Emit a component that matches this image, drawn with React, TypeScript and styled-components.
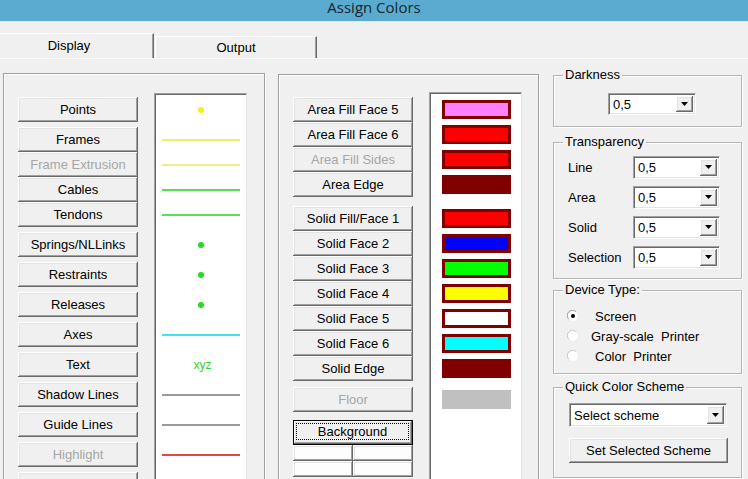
import React from 'react';
import styled, { createGlobalStyle, css } from 'styled-components';

const GlobalStyle = createGlobalStyle`
  html, body {
    margin: 0;
    padding: 0;
    background: #f0f0f0;
  }
  body {
    font-family: "Liberation Sans", Arial, sans-serif;
    font-size: 13px;
    color: #000;
  }
`;

const raised = css`
  box-shadow: inset -1px -1px #696969, inset 1px 1px #ffffff,
    inset -2px -2px #a0a0a0, inset 2px 2px #e3e3e3;
`;

const Window = styled.div`
  width: 748px;
  height: 479px;
  overflow: hidden;
  background: #f0f0f0;
  display: flex;
  flex-direction: column;
`;

const TitleBar = styled.div`
  flex: none;
  height: 21px;
  background: #5babd0;
  border-bottom: 1px solid #e6e6e6;
  text-align: center;
  font-family: "Open Sans", "Noto Sans", sans-serif;
  font-size: 15px;
  line-height: 15px;
  color: #16252d;
`;

const TabStrip = styled.div`
  flex: none;
  height: 36px;
  display: flex;
  align-items: flex-end;
`;

const Tab = styled.div<{ $active?: boolean; $width: number }>`
  box-sizing: border-box;
  width: ${p => p.$width}px;
  height: ${p => (p.$active ? 25 : 22)}px;
  margin-left: ${p => (p.$active ? 0 : 1)}px;
  padding-right: ${p => (p.$active ? 16 : 0)}px;
  padding-bottom: ${p => (p.$active ? 1 : 0)}px;
  border-top: 1px solid #fff;
  border-left: 1px solid ${p => (p.$active ? '#f0f0f0' : '#fff')};
  border-right: 1px solid #696969;
  box-shadow: inset -1px 0 #a0a0a0;
  display: flex;
  align-items: center;
  justify-content: center;
`;

const Page = styled.div`
  flex: 1;
  min-height: 0;
  border-top: 1px solid #fff;
  display: flex;
  align-items: flex-start;
  padding-left: 3px;
`;

const Panel = styled.div<{ $top: number; $left: number; $width: number; $padTop: number }>`
  box-sizing: border-box;
  flex: none;
  width: ${p => p.$width}px;
  height: 430px;
  margin: ${p => p.$top}px 0 0 ${p => p.$left}px;
  padding: ${p => p.$padTop}px 0 0 14px;
  border: 1px solid #a0a0a0;
  box-shadow: inset 1px 1px #fff, 1px 1px #fff;
  display: flex;
  align-items: flex-start;
  gap: 16px;
`;

const ButtonColumn = styled.div<{ $offset: number }>`
  width: 120px;
  margin-top: ${p => p.$offset}px;
  display: flex;
  flex-direction: column;
`;

const Btn = styled.button<{ $gap?: number; $width?: number; $height?: number; $left?: number }>`
  box-sizing: border-box;
  display: flex;
  align-items: center;
  justify-content: center;
  width: ${p => p.$width ?? 120}px;
  height: ${p => p.$height ?? 25}px;
  margin: ${p => p.$gap ?? 0}px 0 0 ${p => p.$left ?? 0}px;
  padding: 0 0 1px;
  border: none;
  background: #f0f0f0;
  font: inherit;
  color: #000;
  white-space: nowrap;
  ${raised}

  &:disabled {
    color: #a6a6a6;
  }
`;

const DefaultBtn = styled(Btn)`
  border: 1px solid #000;
  padding: 2px 3px 4px 2px;
  align-items: stretch;
`;

const FocusRing = styled.span`
  flex: 1;
  display: flex;
  align-items: center;
  justify-content: center;
  border: 1px dotted #000;
`;

const SmallGrid = styled.div`
  display: grid;
  grid-template-columns: 60px 60px;
`;

const SmallBtn = styled(Btn)`
  background: #fdfdfd;
`;

const Preview = styled.div<{ $padTop: number }>`
  box-sizing: border-box;
  width: 93px;
  height: 420px;
  padding-top: ${p => p.$padTop}px;
  background: #fff;
  border-top: 1px solid #a0a0a0;
  border-left: 1px solid #a0a0a0;
  border-right: 1px solid #e3e3e3;
  border-bottom: 1px solid #e3e3e3;
  box-shadow: inset 1px 1px #696969;
`;

const MarkerRow = styled.div<{ $gap?: number; $center?: boolean }>`
  height: 25px;
  margin-top: ${p => p.$gap ?? 0}px;
  display: flex;
  align-items: center;
  justify-content: ${p => (p.$center ? 'center' : 'flex-start')};
`;

const Dot = styled.span<{ $color: string }>`
  width: 6px;
  height: 6px;
  border-radius: 50%;
  background: ${p => p.$color};
  margin-left: 1px;
`;

const Line = styled.span<{ $color: string }>`
  width: 78px;
  height: 2px;
  margin-left: 7px;
  background: ${p => p.$color};
`;

const MarkerText = styled.span<{ $color: string }>`
  font-size: 12px;
  color: ${p => p.$color};
  margin-left: 4px;
`;

const Swatch = styled.span<{ $fill: string; $framed?: boolean }>`
  box-sizing: border-box;
  width: 69px;
  height: 19px;
  margin-left: 12px;
  background: ${p => p.$fill};
  border: 3px solid ${p => (p.$framed ? '#800000' : p.$fill)};
`;

const RightColumn = styled.div`
  flex: none;
  width: 189px;
  margin-left: 14px;
  display: flex;
  flex-direction: column;
`;

const Group = styled.fieldset<{ $gap: number; $height: number }>`
  box-sizing: border-box;
  min-width: 0;
  height: ${p => p.$height}px;
  margin: ${p => p.$gap}px 0 0;
  padding: 0;
  border: 1px solid #b5b5b5;
  box-shadow: inset 1px 1px #fff, 1px 1px #fff;
`;

const Legend = styled.legend`
  margin-left: 9px;
  padding: 0 2px;
  line-height: 16px;
  background: #f0f0f0;
`;

const Combo = styled.div<{ $width: number; $height: number; $top?: number; $left?: number }>`
  box-sizing: border-box;
  width: ${p => p.$width}px;
  height: ${p => p.$height}px;
  margin: ${p => p.$top ?? 0}px 0 0 ${p => p.$left ?? 0}px;
  padding: 2px;
  background: #fff;
  border-top: 1px solid #a0a0a0;
  border-left: 1px solid #a0a0a0;
  border-right: 1px solid #fff;
  border-bottom: 1px solid #fff;
  box-shadow: inset 1px 1px #696969, inset -1px -1px #e3e3e3;
  display: flex;
`;

const ComboValue = styled.span`
  flex: 1;
  display: flex;
  align-items: center;
  padding-left: 2px;
  white-space: nowrap;
`;

const ComboArrow = styled.span`
  width: 17px;
  background: #f0f0f0;
  display: flex;
  align-items: center;
  justify-content: center;
  ${raised}
`;

const TransRow = styled.div`
  height: 30px;
  padding-left: 14px;
  display: grid;
  grid-template-columns: 65px 87px;
  align-items: center;
`;

const TransList = styled.div`
  padding-top: 2px;
`;

const RadioList = styled.div`
  padding: 8px 0 0 13px;
`;

const RadioRow = styled.div<{ $indent: number }>`
  height: 20px;
  display: flex;
  align-items: center;
`;

const RadioLabel = styled.span<{ $indent: number }>`
  margin-left: ${p => p.$indent}px;
  white-space: pre;
`;

type Marker =
  | { kind: 'dot'; color: string }
  | { kind: 'line'; color: string }
  | { kind: 'text'; color: string; text: string };

interface DisplayRow {
  label: string;
  gap?: number;
  disabled?: boolean;
  marker?: Marker;
}

const displayRows: DisplayRow[] = [
  { label: 'Points', marker: { kind: 'dot', color: '#f2f21a' } },
  { label: 'Frames', gap: 5, marker: { kind: 'line', color: '#eeee6a' } },
  { label: 'Frame Extrusion', disabled: true, marker: { kind: 'line', color: '#f0f080' } },
  { label: 'Cables', marker: { kind: 'line', color: '#55e055' } },
  { label: 'Tendons', marker: { kind: 'line', color: '#55e055' } },
  { label: 'Springs/NLLinks', gap: 5, marker: { kind: 'dot', color: '#1ede1e' } },
  { label: 'Restraints', gap: 5, marker: { kind: 'dot', color: '#1ede1e' } },
  { label: 'Releases', gap: 5, marker: { kind: 'dot', color: '#1ede1e' } },
  { label: 'Axes', gap: 5, marker: { kind: 'line', color: '#40e4f0' } },
  { label: 'Text', gap: 5, marker: { kind: 'text', color: '#33d433', text: 'xyz' } },
  { label: 'Shadow Lines', gap: 5, marker: { kind: 'line', color: '#9a9a9a' } },
  { label: 'Guide Lines', gap: 5, marker: { kind: 'line', color: '#9a9a9a' } },
  { label: 'Highlight', gap: 5, disabled: true, marker: { kind: 'line', color: '#e84646' } },
  { label: '', gap: 5, disabled: true },
];

interface ColorRow {
  label: string;
  gap?: number;
  disabled?: boolean;
  fill: string;
  framed?: boolean;
}

const colorRows: ColorRow[] = [
  { label: 'Area Fill Face 5', fill: '#ff80ff', framed: true },
  { label: 'Area Fill Face 6', fill: '#ff0000', framed: true },
  { label: 'Area Fill Sides', disabled: true, fill: '#ff0000', framed: true },
  { label: 'Area Edge', fill: '#800000' },
  { label: 'Solid Fill/Face 1', gap: 9, fill: '#ff0000', framed: true },
  { label: 'Solid Face 2', fill: '#0000ff', framed: true },
  { label: 'Solid Face 3', fill: '#00ff00', framed: true },
  { label: 'Solid Face 4', fill: '#ffff00', framed: true },
  { label: 'Solid Face 5', fill: '#ffffff', framed: true },
  { label: 'Solid Face 6', fill: '#00ffff', framed: true },
  { label: 'Solid Edge', fill: '#800000' },
  { label: 'Floor', gap: 6, disabled: true, fill: '#c0c0c0' },
];

const transparency = ['Line', 'Area', 'Solid', 'Selection'];

const devices = [
  { label: 'Screen', indent: 16, checked: true },
  { label: 'Gray-scale  Printer', indent: 12 },
  { label: 'Color  Printer', indent: 16 },
];

function DownArrow() {
  return (
    <svg width="7" height="4" viewBox="0 0 7 4">
      <polygon points="0,0 7,0 3.5,4" fill="#000" />
    </svg>
  );
}

function Radio({ checked }: { checked?: boolean }) {
  return (
    <svg width="12" height="12" viewBox="0 0 12 12">
      <circle cx="6" cy="6" r="5.5" fill="#fff" stroke="#ececec" />
      <path d="M1.8 9.2 A5 5 0 0 1 9.2 1.8" fill="none" stroke={checked ? '#9a9a9a' : '#c8c8c8'} />
      {checked && <circle cx="6" cy="6" r="2" fill="#000" />}
    </svg>
  );
}

function ComboBox(props: { value: string; width: number; height: number; top?: number; left?: number }) {
  return (
    <Combo $width={props.width} $height={props.height} $top={props.top} $left={props.left}>
      <ComboValue>{props.value}</ComboValue>
      <ComboArrow>
        <DownArrow />
      </ComboArrow>
    </Combo>
  );
}

function renderMarker(marker?: Marker) {
  if (!marker) return null;
  if (marker.kind === 'dot') return <Dot $color={marker.color} />;
  if (marker.kind === 'line') return <Line $color={marker.color} />;
  return <MarkerText $color={marker.color}>{marker.text}</MarkerText>;
}

export default function App() {
  return (
    <Window>
      <GlobalStyle />
      <TitleBar>Assign Colors</TitleBar>
      <TabStrip>
        <Tab $active $width={154}>Display</Tab>
        <Tab $width={162}>Output</Tab>
      </TabStrip>
      <Page>
        <Panel $top={14} $left={0} $width={262} $padTop={19}>
          <ButtonColumn $offset={4}>
            {displayRows.map((row, i) => (
              <Btn key={i} $gap={row.gap} disabled={row.disabled}>
                {row.label}
              </Btn>
            ))}
          </ButtonColumn>
          <Preview $padTop={3}>
            {displayRows.map((row, i) => (
              <MarkerRow key={i} $gap={row.gap} $center={row.marker?.kind !== 'line'}>
                {renderMarker(row.marker)}
              </MarkerRow>
            ))}
          </Preview>
        </Panel>

        <Panel $top={15} $left={13} $width={261} $padTop={17}>
          <ButtonColumn $offset={5}>
            {colorRows.map(row => (
              <Btn key={row.label} $gap={row.gap} disabled={row.disabled}>
                {row.label}
              </Btn>
            ))}
            <DefaultBtn $gap={8}>
              <FocusRing>Background</FocusRing>
            </DefaultBtn>
            <SmallGrid>
              <SmallBtn $width={60} $height={16} />
              <SmallBtn $width={60} $height={16} />
              <SmallBtn $width={60} $height={16} />
              <SmallBtn $width={60} $height={16} />
            </SmallGrid>
          </ButtonColumn>
          <Preview $padTop={4}>
            {colorRows.map(row => (
              <MarkerRow key={row.label} $gap={row.gap}>
                <Swatch $fill={row.fill} $framed={row.framed} />
              </MarkerRow>
            ))}
          </Preview>
        </Panel>

        <RightColumn>
          <Group $gap={8} $height={60}>
            <Legend>Darkness</Legend>
            <ComboBox value="0,5" width={88} height={22} top={10} left={54} />
          </Group>

          <Group $gap={7} $height={145}>
            <Legend>Transparency</Legend>
            <TransList>
              {transparency.map(name => (
                <TransRow key={name}>
                  <span>{name}</span>
                  <ComboBox value="0,5" width={87} height={23} />
                </TransRow>
              ))}
            </TransList>
          </Group>

          <Group $gap={3} $height={92}>
            <Legend>Device Type:</Legend>
            <RadioList>
              {devices.map(d => (
                <RadioRow key={d.label} $indent={d.indent}>
                  <Radio checked={d.checked} />
                  <RadioLabel $indent={d.indent}>{d.label}</RadioLabel>
                </RadioRow>
              ))}
            </RadioList>
          </Group>

          <Group $gap={5} $height={99}>
            <Legend>Quick Color Scheme</Legend>
            <ComboBox value="Select scheme" width={158} height={24} top={8} left={15} />
            <Btn $gap={11} $width={159} $left={15}>
              Set Selected Scheme
            </Btn>
          </Group>
        </RightColumn>
      </Page>
    </Window>
  );
}
